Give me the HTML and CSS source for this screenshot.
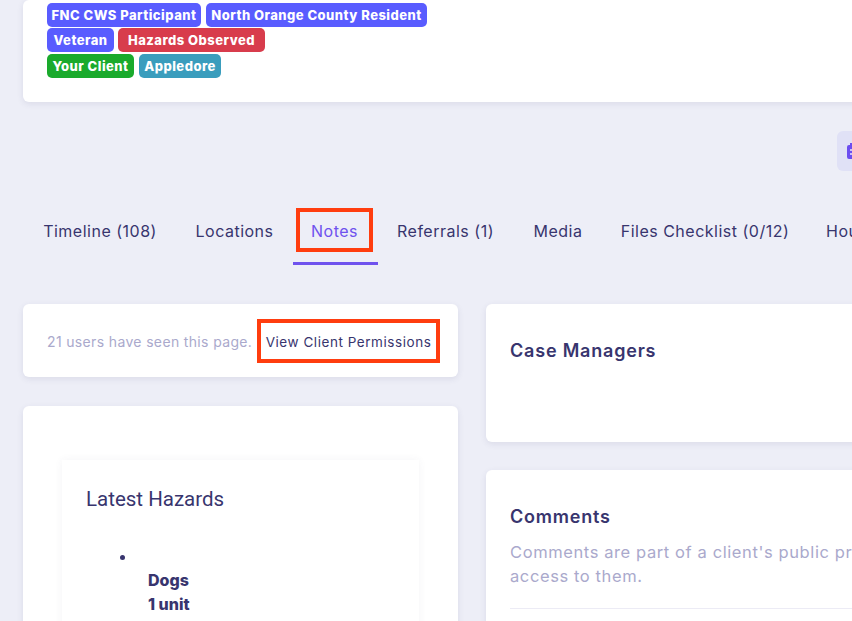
FILE: index.html
```html
<!DOCTYPE html>
<html lang="en">
<head>
<meta charset="utf-8">
<title>Client notes</title>
<link rel="stylesheet" href="styles.css">
</head>
<body>
<div class="page">
  <section class="card profile">
    <div class="tag-row">
      <span class="tag tag-blue tag-a">FNC CWS Participant</span>
      <span class="tag tag-blue tag-b">North Orange County Resident</span>
    </div>
    <div class="tag-row">
      <span class="tag tag-blue tag-c">Veteran</span>
      <span class="tag tag-red tag-d">Hazards Observed</span>
    </div>
    <div class="tag-row">
      <span class="tag tag-green tag-e">Your Client</span>
      <span class="tag tag-teal tag-f">Appledore</span>
    </div>
  </section>

  <div class="actions">
    <button class="action-btn" type="button" aria-label="Calendar">
      <svg width="16" height="16" viewBox="0 0 16 16" aria-hidden="true">
        <path class="cal" d="M3 0h2v2h6V0h2v2h1a2 2 0 0 1 2 2v10a2 2 0 0 1-2 2H2a2 2 0 0 1-2-2V4a2 2 0 0 1 2-2h1z"/>
        <path class="cal-dots" d="M3 6h2v2H3zM7 6h2v2H7zM11 6h2v2h-2zM3 10h2v2H3zM7 10h2v2H7zM11 10h2v2h-2z"/>
      </svg>
    </button>
  </div>

  <nav class="tabs">
    <a class="tab">Timeline (108)</a>
    <a class="tab">Locations</a>
    <a class="tab active"><span class="hl hl-tab">Notes</span></a>
    <a class="tab">Referrals (1)</a>
    <a class="tab">Media</a>
    <a class="tab">Files Checklist (0/12)</a>
    <a class="tab tab-last">Household</a>
  </nav>

  <div class="columns">
    <div class="col">
      <section class="card seen">
        <span class="muted">21 users have seen this page.</span>
        <a class="hl hl-link">View Client Permissions</a>
      </section>
      <section class="card notes">
        <div class="panel">
          <h3 class="panel-title">Latest Hazards</h3>
          <ul class="hazards">
            <li class="hazard"><br><strong>Dogs</strong><br><strong>1 unit</strong></li>
          </ul>
        </div>
      </section>
    </div>
    <div class="col">
      <section class="card managers">
        <h2 class="card-title">Case Managers</h2>
      </section>
      <section class="card comments">
        <h2 class="card-title">Comments</h2>
        <p class="muted desc">Comments are part of a client's public profile. All users have<br>access to them.</p>
        <hr class="divider">
      </section>
    </div>
  </div>
</div>
</body>
</html>
```
FILE: styles.css
```css
* { box-sizing: border-box; }
html, body { margin: 0; height: 621px; overflow: hidden; background: #edeef7; }
body { font-family: Inter, "Open Sans", sans-serif; color: #38356e; }
.page { width: 1300px; padding: 0 0 0 23px; }

.card {
  background: #fff;
  border-radius: 6px;
  box-shadow: 0 2px 6px rgba(60, 60, 110, .1);
}
.profile { height: 102px; padding: 3px 24px 0; }
.tag-row { display: flex; gap: 5px; height: 25px; }
.tag-row:last-child { margin-top: 1px; }
.tag {
  height: 24px; border-radius: 5px; color: #fff;
  font-size: 13px; font-weight: 800; line-height: 24px; letter-spacing: .48px;
  text-align: center; white-space: nowrap;
}
.tag-a { width: 154px; }
.tag-b { width: 221px; }
.tag-c { width: 67px; }
.tag-d { width: 147px; margin-left: -1px; }
.tag-e { width: 87px; }
.tag-f { width: 82px; }
.tag-blue { background: #595cff; }
.tag-red { background: #d83c4c; }
.tag-green { background: #1aaa2c; }
.tag-teal { background: #3a9dbd; }

.actions { display: flex; padding: 29px 0 0 814px; }
.action-btn {
  width: 44px; height: 40px; padding: 0 0 0 10px; border: 0; border-radius: 6px;
  background: #e0e1f6; display: flex; align-items: center;
}
.cal { fill: #6c4df0; }
.cal-dots { fill: #c9c2fb; }

.tabs {
  display: grid; grid-template-columns: 152px 117px 85px 135px 90px 204px 150px;
  margin: 37px 0 0 1px; height: 57px; white-space: nowrap;
}
.tab {
  display: block; height: 57px; font-size: 16px; line-height: 46px; letter-spacing: .5px;
  text-align: center; color: #38356e;
}
.tab-last { text-align: left; padding-left: 19px; }
.tab.active { color: #6f52ee; border-bottom: 3px solid #6f52ee; position: relative; }
.hl { border: 4px solid #ff3d0f; }
.hl-tab {
  position: absolute; left: 3px; top: 0; width: 77px; height: 44px;
  line-height: 38px; text-align: center;
}

.columns { display: grid; grid-template-columns: 435px 800px; gap: 28px; margin-top: 39px; }
.col { display: flex; flex-direction: column; gap: 28px; }

.seen { height: 73px; margin-bottom: 1px; padding: 2px 0 0 24px; display: flex; align-items: center; position: relative; font-size: 14px; letter-spacing: .35px; }
.muted { color: #aaa9cc; }
.hl-link {
  position: absolute; left: 234px; top: 15px; width: 183px; height: 44px;
  line-height: 38px; text-align: center; color: #38356e; font-size: 13.5px; letter-spacing: .55px;
}

.notes { height: 400px; padding: 54px 39px 0; }
.panel {
  height: 340px; padding: 26px 24px 0;
  box-shadow: 0 0 8px rgba(60, 60, 110, .06);
}
.panel-title {
  margin: 0; font-family: Roboto, sans-serif; font-size: 20.5px; font-weight: 400; line-height: 26px;
  color: #38356e;
}
.hazards { margin: 32px 0 0; padding: 0 0 0 51px; }
.hazard { padding-left: 11px; font-size: 16px; line-height: 24px; }
.hazard strong { font-weight: 800; }

.managers { height: 138px; padding: 36px 24px 0; }
.comments { height: 400px; padding: 36px 24px 0; }
.card-title { margin: 0; font-size: 18px; font-weight: 600; line-height: 22px; letter-spacing: .8px; color: #38356e; }
.desc { margin: 12px 0 0; font-size: 16.5px; line-height: 24px; letter-spacing: .6px; white-space: nowrap; }
.divider { margin: 20px 0 0; border: 0; border-top: 1px solid #ecebf5; }
```
